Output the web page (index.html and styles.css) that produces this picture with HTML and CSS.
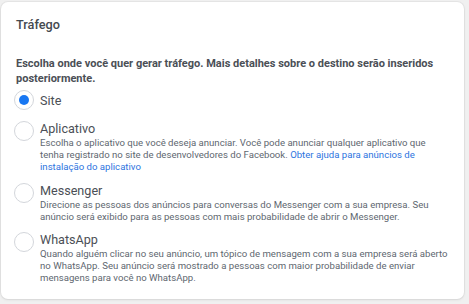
FILE: index.html
```html
<!DOCTYPE html>
<html lang="pt-BR">
<head>
<meta charset="utf-8">
<link rel="stylesheet" href="styles.css">
</head>
<body>
<div class="card">
  <h2 class="title">Tráfego</h2>
  <p class="intro">Escolha onde você quer gerar tráfego. Mais detalhes sobre o destino serão inseridos posteriormente.</p>
  <div class="options">
    <div class="option option-simple">
      <span class="radio checked"></span>
      <div class="option-text"><div class="label">Site</div></div>
    </div>
    <div class="option option-app">
      <span class="radio"></span>
      <div class="option-text">
        <div class="label">Aplicativo</div>
        <div class="desc">Escolha o aplicativo que você deseja anunciar. Você pode anunciar qualquer aplicativo que tenha registrado no site de desenvolvedores do Facebook. <a class="link" href="#">Obter ajuda para anúncios de instalação do aplicativo</a></div>
      </div>
    </div>
    <div class="option">
      <span class="radio"></span>
      <div class="option-text">
        <div class="label">Messenger</div>
        <div class="desc">Direcione as pessoas dos anúncios para conversas do Messenger com a sua empresa. Seu anúncio será exibido para as pessoas com mais probabilidade de abrir o Messenger.</div>
      </div>
    </div>
    <div class="option">
      <span class="radio"></span>
      <div class="option-text">
        <div class="label">WhatsApp</div>
        <div class="desc">Quando alguém clicar no seu anúncio, um tópico de mensagem com a sua empresa será aberto no WhatsApp. Seu anúncio será mostrado a pessoas com maior probabilidade de enviar mensagens para você no WhatsApp.</div>
      </div>
    </div>
  </div>
</div>
</body>
</html>
```

FILE: styles.css
```css
html, body {
  margin: 0;
  padding: 0;
}
body {
  background: #f0f0f0;
  font-family: Roboto, "Liberation Sans", sans-serif;
  width: 469px;
  height: 304px;
  overflow: hidden;
}
.card {
  box-sizing: border-box;
  margin: 2px 0 0 1px;
  width: 463px;
  height: 297px;
  background: #fff;
  border-radius: 7px;
  box-shadow: 0 0 0 1px rgba(0, 0, 0, 0.04), 0 1px 3px rgba(0, 0, 0, 0.08);
  padding: 15px 14px 0 13px;
}
.title {
  margin: 0 0 0 2px;
  font-size: 12.7px;
  line-height: 16px;
  font-weight: 500;
  color: #444950;
}
.intro {
  margin: 23px 0 0 2px;
  font-size: 11px;
  line-height: 15px;
  font-weight: 700;
  color: #4b4f56;
}
.options {
  margin-top: 4px;
  display: flex;
  flex-direction: column;
  gap: 9px;
}
.option {
  display: flex;
  align-items: flex-start;
  gap: 6px;
}
.option-simple {
  align-items: center;
  margin-bottom: 2px;
}
.option-app .desc {
  padding-bottom: 1px;
}
.radio {
  box-sizing: border-box;
  flex: 0 0 20px;
  width: 20px;
  height: 20px;
  border-radius: 50%;
  border: 1px solid #d3d6db;
  background: #fff;
  display: flex;
  align-items: center;
  justify-content: center;
}
.radio.checked::after {
  content: "";
  width: 10px;
  height: 10px;
  border-radius: 50%;
  background: #1877f2;
}
.option-text {
  flex: 1;
  min-width: 0;
}
.label {
  font-size: 12.6px;
  line-height: 15px;
  color: #4b4f56;
}
.desc {
  margin-top: 1px;
  font-size: 9.6px;
  line-height: 12px;
  color: #606770;
}
.link {
  color: #2d74e0;
  text-decoration: none;
}
```
